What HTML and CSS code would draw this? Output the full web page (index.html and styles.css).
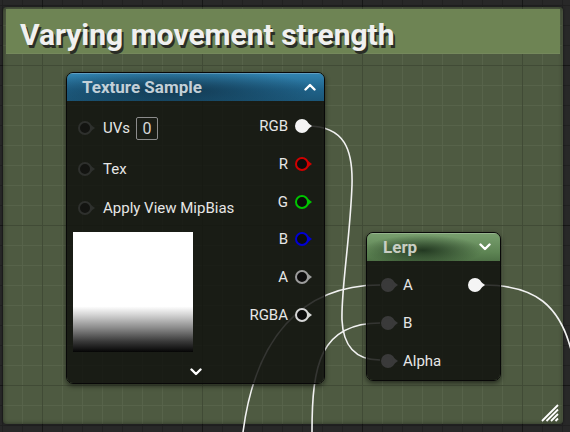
FILE: index.html
```html
<!DOCTYPE html>
<html>
<head>
<meta charset="utf-8">
<link rel="stylesheet" href="styles.css">
</head>
<body>
<div class="graph">
  <div class="comment">
    <div class="comment-title">Varying movement strength</div>
    <svg class="resize" width="18" height="18" viewBox="0 0 18 18">
      <path d="M1 17 L17 1 M5.5 17 L17 5.5 M10 17 L17 10 M14.5 17 L17 14.5" stroke="#ffffff" stroke-width="1.8" fill="none"/>
    </svg>
  </div>

  <svg class="wires" width="570" height="432" viewBox="0 0 570 432">
    <g fill="none" stroke="#f2f2f2" stroke-width="1.6">
      <path d="M307 126 C 345 126 353 150 352 185 C 350 240 341 290 342 320 C 343 345 355 360 380 360"/>
      <path d="M243 432 C 255 340 300 285 380 285"/>
      <path d="M312 432 C 312 365 320 323 380 323"/>
      <path d="M483 285 C 530 285 565 300 575 370"/>
    </g>
  </svg>

  <div class="node tex">
    <div class="node-head tex-head">
      <span class="head-title">Texture Sample</span>
      <svg class="chev" width="12" height="8" viewBox="0 0 12 8"><path d="M1.5 6.5 L6 2 L10.5 6.5" fill="none" stroke="#fff" stroke-width="2.4" stroke-linecap="round" stroke-linejoin="round"/></svg>
    </div>
    <div class="node-body tex-body">
      <div class="cols">
        <div class="inputs">
          <div class="row uv-row"><span class="pin off"></span><span class="lbl">UVs</span><span class="uvbox">0</span></div>
          <div class="row"><span class="pin off"></span><span class="lbl">Tex</span></div>
          <div class="row"><span class="pin off"></span><span class="lbl">Apply View MipBias</span></div>
          <div class="preview"></div>
        </div>
        <div class="outputs">
          <div class="row out"><span class="lbl">RGB</span><span class="pin white"></span></div>
          <div class="row out"><span class="lbl">R</span><span class="pin r"></span></div>
          <div class="row out"><span class="lbl">G</span><span class="pin g"></span></div>
          <div class="row out"><span class="lbl">B</span><span class="pin b"></span></div>
          <div class="row out"><span class="lbl">A</span><span class="pin a"></span></div>
          <div class="row out"><span class="lbl">RGBA</span><span class="pin rgba"></span></div>
        </div>
      </div>
      <div class="expand">
        <svg class="chev" width="12" height="8" viewBox="0 0 12 8"><path d="M1.5 1.5 L6 6 L10.5 1.5" fill="none" stroke="#fff" stroke-width="2.4" stroke-linecap="round" stroke-linejoin="round"/></svg>
      </div>
    </div>
  </div>

  <div class="node lerp">
    <div class="node-head lerp-head">
      <span class="head-title">Lerp</span>
      <svg class="chev" width="12" height="8" viewBox="0 0 12 8"><path d="M1.5 1.5 L6 6 L10.5 1.5" fill="none" stroke="#fff" stroke-width="2.4" stroke-linecap="round" stroke-linejoin="round"/></svg>
    </div>
    <div class="node-body lerp-body">
      <div class="row lrow"><span class="pin big dim"></span><span class="lbl">A</span><span class="pin big white push"></span></div>
      <div class="row lrow"><span class="pin big dim"></span><span class="lbl">B</span></div>
      <div class="row lrow"><span class="pin big dim"></span><span class="lbl">Alpha</span></div>
    </div>
  </div>
</div>
</body>
</html>
```

FILE: styles.css
```css
html, body {
  margin: 0;
  padding: 0;
  width: 570px;
  height: 432px;
  overflow: hidden;
}

body {
  font-family: Roboto, "Liberation Sans", sans-serif;
  background-color: #282828;
  background-image:
    linear-gradient(to right, #171717 1px, transparent 1px),
    linear-gradient(to bottom, #171717 1px, transparent 1px),
    linear-gradient(to right, #212121 1px, transparent 1px),
    linear-gradient(to bottom, #212121 1px, transparent 1px);
  background-size: 160px 160px, 160px 160px, 20px 20px, 20px 20px;
  background-position: 42px 65px, 42px 65px, 22px 5px, 22px 5px;
}

.graph {
  position: relative;
  width: 570px;
  height: 432px;
}

/* comment box */
.comment {
  position: absolute;
  left: 3px;
  top: 7px;
  width: 560px;
  height: 417px;
  box-sizing: border-box;
  padding: 2px 3px 0 3px;
  border-radius: 4px;
  background-color: #4e5a41;
  background-image:
    linear-gradient(to right, #414b36 1px, transparent 1px),
    linear-gradient(to bottom, #414b36 1px, transparent 1px),
    linear-gradient(to right, #57634a 1px, transparent 1px),
    linear-gradient(to bottom, #57634a 1px, transparent 1px);
  background-size: 160px 160px, 160px 160px, 20px 20px, 20px 20px;
  background-position: 42px 65px, 42px 65px, 22px 5px, 22px 5px;
  background-attachment: fixed;
  box-shadow: inset 0 0 4px rgba(0, 0, 0, 0.45), 0 0 3px rgba(0, 0, 0, 0.5);
}

.comment-title {
  height: 45px;
  box-sizing: border-box;
  padding: 6px 0 0 14px;
  line-height: 40px;
  background: #6e8454;
  border-bottom: 1px solid #75895c;
  font-weight: 700;
  font-size: 30px;
  color: #f0f0f0;
  text-shadow: 2px 3px 0 #2a2d26;
  white-space: nowrap;
}

.resize {
  position: absolute;
  right: 4px;
  bottom: 2px;
}

.wires {
  position: absolute;
  left: 0;
  top: 0;
}

/* nodes */
.node {
  position: absolute;
  border: 1px solid #080808;
  border-radius: 7px;
  overflow: hidden;
  box-shadow: 0 2px 5px rgba(0, 0, 0, 0.55);
  display: flex;
  flex-direction: column;
}

.tex {
  left: 66px;
  top: 72px;
  width: 259px;
  height: 312px;
  box-sizing: border-box;
}

.lerp {
  left: 366px;
  top: 232px;
  width: 135px;
  height: 149px;
  box-sizing: border-box;
}

.node-head {
  height: 28px;
  flex: none;
  display: flex;
  align-items: center;
  justify-content: space-between;
  box-shadow: inset 0 1px 0 rgba(255, 255, 255, 0.22);
}

.head-title {
  font-weight: 700;
  font-size: 17px;
}

.tex-head {
  padding: 0 8px 0 15px;
  background:
    radial-gradient(ellipse 55% 75% at 42% 60%, rgba(12, 36, 52, 0.65), rgba(12, 36, 52, 0) 100%),
    linear-gradient(to bottom, #3386b3, #1f6289 60%, #1b5678);
}

.tex-head .head-title {
  color: #c3d0d8;
}

.lerp-head {
  padding: 0 9px 0 16px;
  background:
    radial-gradient(ellipse 45% 55% at 42% 62%, rgba(28, 48, 28, 0.9), rgba(28, 48, 28, 0) 100%),
    linear-gradient(to bottom, #7aa070, #5d8453 70%, #4e7146);
}

.lerp-head .head-title {
  color: #c9cec4;
}

.node-body {
  flex: 1;
  background: rgba(15, 17, 13, 0.84);
  color: #e6e6e6;
  font-size: 15px;
}

.tex-body {
  display: flex;
  flex-direction: column;
}

.cols {
  display: flex;
  justify-content: space-between;
}

.inputs {
  padding: 12px 0 0 6px;
  display: flex;
  flex-direction: column;
  gap: 13px;
}

.inputs .row {
  padding-left: 5px;
  gap: 8px;
}

.outputs {
  padding: 12px 12px 0 0;
  display: flex;
  flex-direction: column;
  gap: 11.8px;
}

.row {
  display: flex;
  align-items: center;
  height: 26px;
  gap: 9px;
  white-space: nowrap;
}

.uv-row {
  height: 30px;
}

.row.out {
  justify-content: flex-end;
  gap: 7px;
}

.uvbox {
  width: 22px;
  height: 23px;
  box-sizing: border-box;
  border: 1px solid #8c8c8c;
  border-radius: 2px;
  margin-left: -2px;
  display: flex;
  align-items: center;
  justify-content: center;
  font-size: 16px;
  color: #d6d6d6;
}

.preview {
  width: 120px;
  height: 120px;
  margin-top: -2px;
  background: linear-gradient(to bottom, #ffffff 0%, #ffffff 62%, #d4d4d4 69%, #8a8a8a 80%, #3a3a3a 91%, #050505 100%);
}

.expand {
  flex: 1;
  display: flex;
  justify-content: center;
  align-items: flex-start;
  padding-top: 16px;
}

/* pins */
.pin {
  position: relative;
  flex: none;
  width: 17px;
  height: 14px;
  --c: #2e302d;
  --fill: #131411;
}

.pin::before {
  content: "";
  position: absolute;
  left: 0;
  top: 0;
  width: 14px;
  height: 14px;
  box-sizing: border-box;
  border-radius: 50%;
  border: 2px solid var(--c);
  background: var(--fill);
}

.pin::after {
  content: "";
  position: absolute;
  left: 13px;
  top: 4px;
  border-left: 4px solid var(--c);
  border-top: 3px solid transparent;
  border-bottom: 3px solid transparent;
}

.pin.white { --c: #f4f4f4; --fill: #f4f4f4; }
.pin.r { --c: #d00000; --fill: #0c0c0c; }
.pin.g { --c: #00c400; --fill: #0c0c0c; }
.pin.b { --c: #0000d4; --fill: #0c0c0c; }
.pin.a { --c: #9c9c9c; --fill: #0c0c0c; }
.pin.rgba { --c: #d6d6d6; --fill: #0c0c0c; }
.pin.dim { --c: #3a3a3a; --fill: #3a3a3a; }

.pin.big {
  width: 18px;
  height: 14px;
}

.lerp-body {
  padding: 11px 14px 0 14px;
  display: flex;
  flex-direction: column;
  gap: 12px;
}

.lrow {
  gap: 4px;
}

.push {
  margin-left: auto;
}
```
